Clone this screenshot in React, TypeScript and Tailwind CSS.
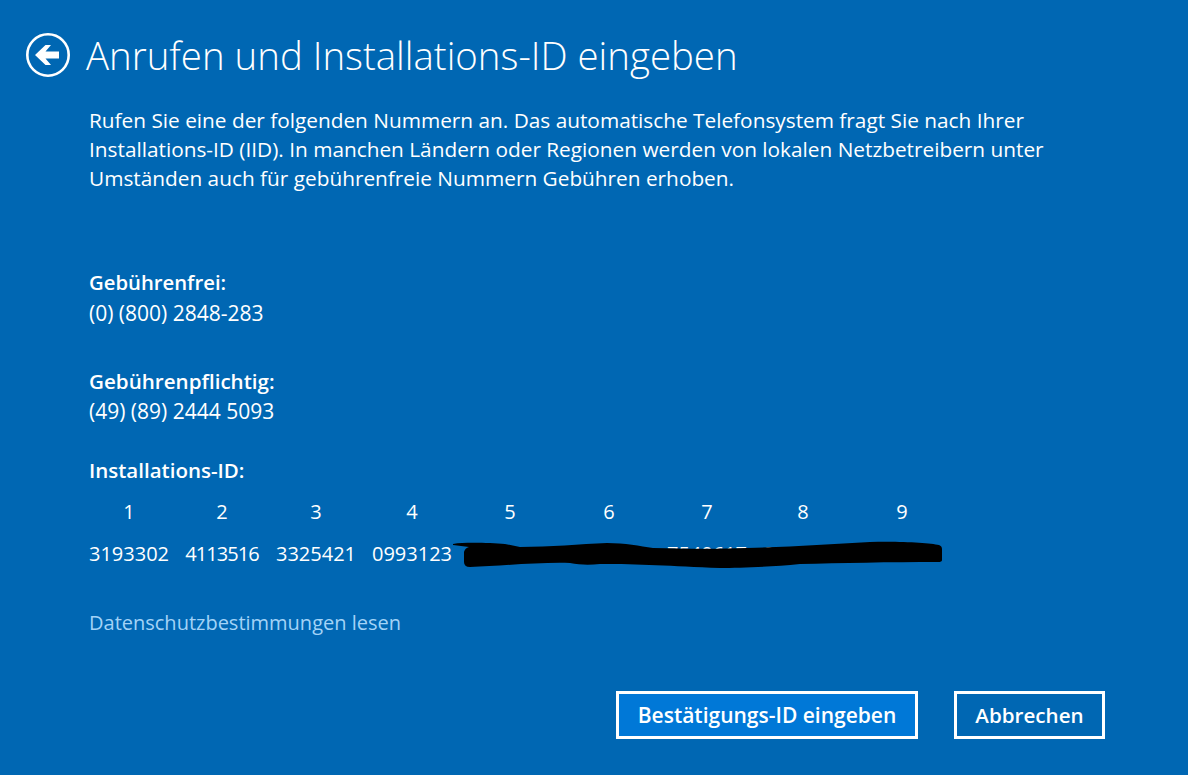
const groups = [
  { label: "1", value: "3193302", cell: "w-[80px]", digits: "" },
  { label: "2", value: "4113516", cell: "w-[74px]", digits: "tracking-[-0.9px]" },
  { label: "3", value: "3325421", cell: "w-[82px]", digits: "" },
  { label: "4", value: "0993123", cell: "w-[78px]", digits: "" },
  { label: "5", value: "0000000", cell: "w-[86px]", digits: "" },
  { label: "6", value: "0000000", cell: "w-[80px]", digits: "" },
  { label: "7", value: "7540617", cell: "w-[84px]", digits: "" },
  { label: "8", value: "0000000", cell: "w-[76px]", digits: "" },
  { label: "9", value: "0000000", cell: "w-[90px]", digits: "" },
];

const font = { fontFamily: '"Open Sans", sans-serif' };

const App = () => {
  return (
    <div
      style={font}
      className="relative w-[1188px] h-[775px] overflow-hidden bg-[#0067b3] text-white text-[20px] leading-[29px]"
    >
      {/* Header */}
      <div className="flex items-center pt-[31px] pl-[26px] gap-[16px]">
        <svg width="44" height="44" viewBox="0 0 44 44" fill="none" className="shrink-0">
          <circle cx="22" cy="22" r="20.7" stroke="white" strokeWidth="2.6" />
          <path d="M33 18.5H19.5L25 12H19.5L9 22L19.5 32H25L19.5 25.5H33Z" fill="white" />
        </svg>
        <h1 className="text-[38.4px] leading-[48px] font-light">Anrufen und Installations-ID eingeben</h1>
      </div>

      <div className="pl-[89px]">
        <p className="mt-[27px] w-[1050px] text-[20.8px]">
          Rufen Sie eine der folgenden Nummern an. Das automatische Telefonsystem fragt Sie nach Ihrer
          <br />
          Installations-ID (IID). In manchen Ländern oder Regionen werden von lokalen Netzbetreibern unter
          <br />
          Umständen auch für gebührenfreie Nummern Gebühren erhoben.
        </p>

        <p className="mt-[75px] text-[20.3px] font-semibold">Gebührenfrei:</p>
        <p className="mt-[2px] text-[21px]">(0) (800) 2848-283</p>

        <p className="mt-[39px] text-[20.6px] font-semibold">Gebührenpflichtig:</p>
        <p className="mt-[1px] text-[21px]">(49) (89) 2444 5093</p>

        <p className="mt-[30px] text-[20.5px] font-semibold">Installations-ID:</p>

        {/* ID groups */}
        <div className="flex gap-[16px] mt-[12px]">
          {groups.map((group) => (
            <div key={group.label} className={`flex flex-col items-center ${group.cell}`}>
              <span>{group.label}</span>
              <span className={`mt-[13px] ${group.digits}`}>{group.value}</span>
            </div>
          ))}
        </div>

        <a className="block mt-[40px] text-[#a3d3f7]">Datenschutzbestimmungen lesen</a>
      </div>

      {/* Buttons */}
      <div className="flex justify-end gap-[36px] mt-[54px] pr-[83px] font-semibold">
        <button className="h-[48px] w-[302px] border-[3px] border-white bg-[#0078d7] text-[21px]">
          Bestätigungs-ID eingeben
        </button>
        <button className="h-[48px] w-[151px] border-[3px] border-white text-[20.6px]">Abbrechen</button>
      </div>

      {/* Scribble over the rest of the ID */}
      <svg className="absolute left-[450px] top-[535px]" width="500" height="40" viewBox="0 0 500 40">
        <path
          fill="black"
          d="M3 9C15 7 40 8 55 9L70 12C100 12 130 9 157 8C175 8 190 11 203 13C240 14 270 14 297 13C340 12 380 9 420 7C450 6 480 8 489 10Q492 11 492 14L492 25Q492 27 488 27C440 27 390 28 350 29C320 32 290 33 270 33C220 31 190 29 150 29C140 30 130 30 120 28C90 27 50 31 20 32Q14 32 14 27L14 17Q15 13 19 12L3 10Z"
        />
      </svg>
    </div>
  );
};

export default App;
